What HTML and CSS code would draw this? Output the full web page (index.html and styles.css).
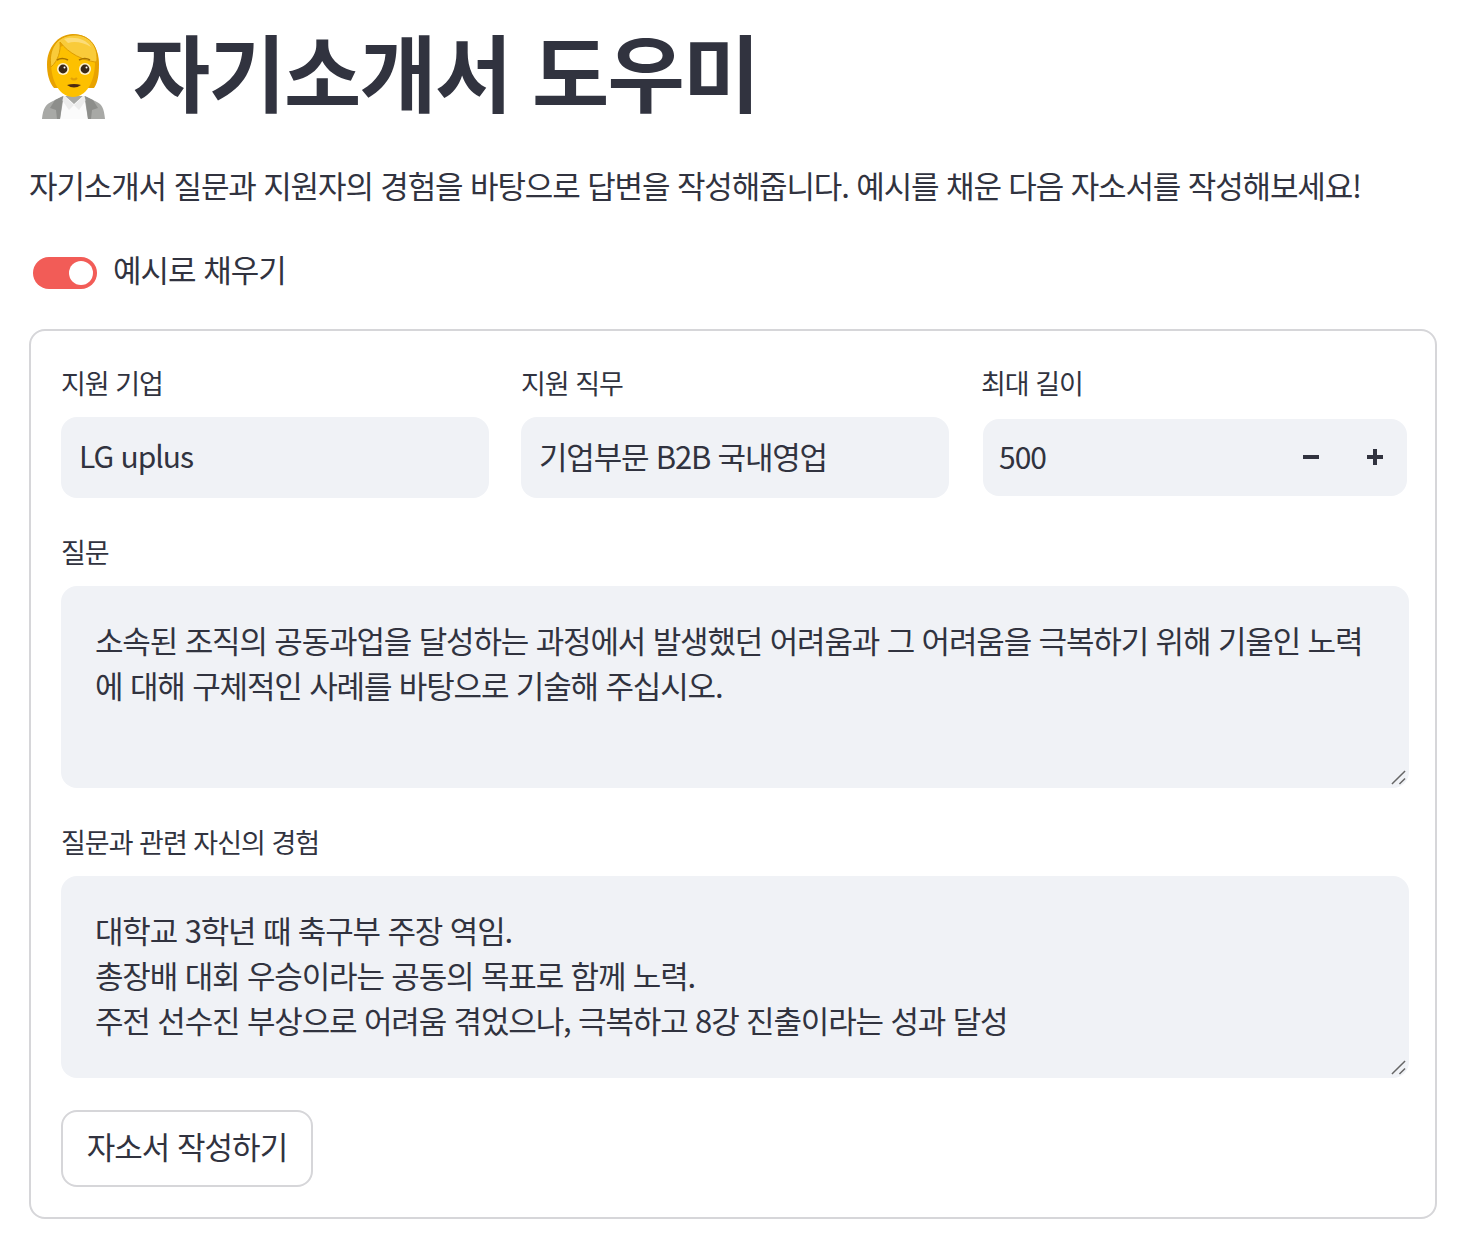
FILE: index.html
```html
<!DOCTYPE html>
<html lang="ko">
<head>
  <meta charset="UTF-8" />
  <meta name="viewport" content="width=device-width, initial-scale=1.0" />
  <title>자기소개서 도우미</title>
  <link rel="stylesheet" href="styles.css">
</head>
<body>

<main class="container">
  <h1 class="title">
    <svg class="emoji" viewBox="0 0 74 94" aria-hidden="true">
      <!-- jacket and shirt -->
      <path d="M6 89 C7 78 10 74 17 71 L28 66 L48 66 L59 71 C66 74 68 78 69 89 Z" fill="#a8a9a6"/>
      <path d="M28 65 L38 74 L48 65 L52 89 L24 89 Z" fill="#fbfbfb"/>
      <path d="M28 66 L38 75 L33 80 L26 70 Z M48 66 L38 75 L43 80 L50 70 Z" fill="#ececec"/>
      <path d="M19 70 L27 66 L24 89 L21 89 L20 80 L14 78 Z M57 70 L49 66 L52 89 L55 89 L56 80 L62 78 Z" fill="#8d8e8b"/>
      <!-- back of the hair -->
      <path d="M37 4 C54 4 63 18 63 34 C63 44 62 52 58 58 L18 58 C13 52 11 44 11 34 C11 18 22 4 37 4 Z" fill="#e8a200"/>
      <!-- face -->
      <path d="M37 67 C24 67 15 52 15 32 C15 22 24 14 37 14 C50 14 59 22 59 32 C59 52 50 67 37 67 Z" fill="#fdc000"/>
      <!-- fringe -->
      <path d="M15 37 C12 20 20 6 37 5 C52 4 62 15 61 30 C61 31 60 32 59 32 C47 30 33 24 24 12 C25 21 22 31 15 37 Z" fill="#f9cb3a" stroke="#dd9c00" stroke-width="1"/>
      <path d="M28 9 C36 6 50 8 55 17 C47 12 38 11 32 13 Z" fill="#fcdc78"/>
      <!-- eyes -->
      <circle cx="27" cy="39" r="6" fill="#fff3cc"/>
      <circle cx="49" cy="39" r="6" fill="#fff3cc"/>
      <circle cx="27" cy="39" r="4.4" fill="#3a2817"/>
      <circle cx="49" cy="39" r="4.4" fill="#3a2817"/>
      <circle cx="28.5" cy="37.5" r="1" fill="#ffffff"/>
      <circle cx="50.5" cy="37.5" r="1" fill="#ffffff"/>
      <path d="M21 30 Q26 27 32 30 M43 30 Q49 27 54 30" stroke="#a87300" stroke-width="1.6" fill="none"/>
      <path d="M35 48 Q38 51 41 48" stroke="#e2a106" stroke-width="2" fill="none"/>
      <path d="M31 55 Q38 53 45 55 Q38 60 31 55 Z" fill="#4d2a12"/>
    </svg>
    <span>자기소개서 도우미</span>
  </h1>

  <p class="intro">자기소개서 질문과 지원자의 경험을 바탕으로 답변을 작성해줍니다. 예시를 채운 다음 자소서를 작성해보세요!</p>

  <div class="toggle-row">
    <span class="toggle"><span class="toggle-knob"></span></span>
    <span class="toggle-label">예시로 채우기</span>
  </div>

  <form class="form-box">
    <div class="form-row">
      <div class="field">
        <label>지원 기업</label>
        <div class="input latin">LG uplus</div>
      </div>
      <div class="field">
        <label>지원 직무</label>
        <div class="input">기업부문 B2B 국내영업</div>
      </div>
      <div class="field">
        <label>최대 길이</label>
        <div class="number-input">
          <span class="number-value">500</span>
          <span class="steppers">
            <svg viewBox="0 0 16 16" class="step"><rect x="0" y="6" width="16" height="4" /></svg>
            <svg viewBox="0 0 16 16" class="step"><rect x="0" y="6" width="16" height="4" /><rect x="6" y="0" width="4" height="16" /></svg>
          </span>
        </div>
      </div>
    </div>

    <div class="field">
      <label>질문</label>
      <div class="textarea">소속된 조직의 공동과업을 달성하는 과정에서 발생했던 어려움과 그 어려움을 극복하기 위해 기울인 노력에 대해 구체적인 사례를 바탕으로 기술해 주십시오.
        <svg class="grip" viewBox="0 0 16 16"><path d="M1 15 L15 1 M9 15 L15 9" /></svg>
      </div>
    </div>

    <div class="field">
      <label>질문과 관련 자신의 경험</label>
      <div class="textarea">대학교 3학년 때 축구부 주장 역임.<br>총장배 대회 우승이라는 공동의 목표로 함께 노력.<br>주전 선수진 부상으로 어려움 겪었으나, 극복하고 8강 진출이라는 성과 달성
        <svg class="grip" viewBox="0 0 16 16"><path d="M1 15 L15 1 M9 15 L15 9" /></svg>
      </div>
    </div>

    <button type="button" class="submit">자소서 작성하기</button>
  </form>
</main>

</body>
</html>
```

FILE: styles.css
```css
body {
  font-family: "Noto Sans CJK KR", "Noto Sans", sans-serif;
  margin: 0;
  padding: 0;
  background-color: #ffffff;
  color: #31333f;
}

.container {
  padding: 0 41px 0 29px;
}

.title {
  display: flex;
  align-items: center;
  gap: 23px;
  height: 140px;
  margin: 0;
  padding-left: 7px;
  font-size: 84px;
  font-weight: 700;
  letter-spacing: -1.8px;
  line-height: 1;
}

.emoji {
  width: 74px;
  height: 94px;
  margin-top: 14px;
  flex: none;
}

.intro {
  margin: 21px 0 0;
  font-size: 31px;
  line-height: 48px;
  letter-spacing: -1.13px;
  white-space: nowrap;
}

.toggle-row {
  display: flex;
  align-items: center;
  gap: 16px;
  margin-top: 40px;
  padding-left: 4px;
  height: 48px;
}

.toggle {
  display: flex;
  align-items: center;
  justify-content: flex-end;
  width: 64px;
  height: 32px;
  padding: 4px;
  box-sizing: border-box;
  border-radius: 16px;
  background-color: #f25c57;
}

.toggle-knob {
  width: 24px;
  height: 24px;
  border-radius: 50%;
  background-color: #ffffff;
}

.toggle-label {
  padding-bottom: 10px;
  font-size: 31px;
  letter-spacing: -1px;
}

.form-box {
  margin-top: 32px;
  padding: 29px 26px 30px 30px;
  border: 2px solid #d6d6d9;
  border-radius: 16px;
  height: 890px;
  box-sizing: border-box;
}

.form-row {
  display: grid;
  grid-template-columns: repeat(3, 428px);
  gap: 32px;
}

.field {
  margin-bottom: 31px;
}

.field label {
  display: block;
  height: 57px;
  font-size: 27px;
  line-height: 46px;
  letter-spacing: -1px;
}

.input {
  height: 81px;
  padding: 0 18px;
  border-radius: 16px;
  background-color: #f0f2f6;
  font-size: 31px;
  line-height: 77px;
  letter-spacing: -1.2px;
}

.input.latin {
  font-size: 30px;
  letter-spacing: -1px;
}

.number-input {
  display: flex;
  align-items: center;
  justify-content: space-between;
  height: 77px;
  margin: 2px;
  padding: 0 24px 0 16px;
  border-radius: 16px;
  background-color: #f0f2f6;
}

.number-value {
  padding-bottom: 4px;
  font-size: 30px;
  letter-spacing: -1px;
}

.steppers {
  display: flex;
  gap: 48px;
  padding-bottom: 2px;
}

.step {
  width: 16px;
  height: 16px;
  fill: #31333f;
}

.textarea {
  position: relative;
  height: 202px;
  box-sizing: border-box;
  padding: 31px 34px 0;
  border-radius: 16px;
  background-color: #f0f2f6;
  font-size: 31px;
  line-height: 45px;
  letter-spacing: -1.15px;
}

.grip {
  position: absolute;
  right: 3px;
  bottom: 3px;
  width: 15px;
  height: 15px;
  stroke: #666666;
  stroke-width: 1.6;
  fill: none;
}

.submit {
  display: block;
  width: 252px;
  height: 77px;
  margin-top: 32px;
  padding: 0 0 6px;
  border: 2px solid #d6d6d9;
  border-radius: 16px;
  background-color: #ffffff;
  color: #31333f;
  font-family: inherit;
  font-size: 31px;
  letter-spacing: -1px;
}
```
